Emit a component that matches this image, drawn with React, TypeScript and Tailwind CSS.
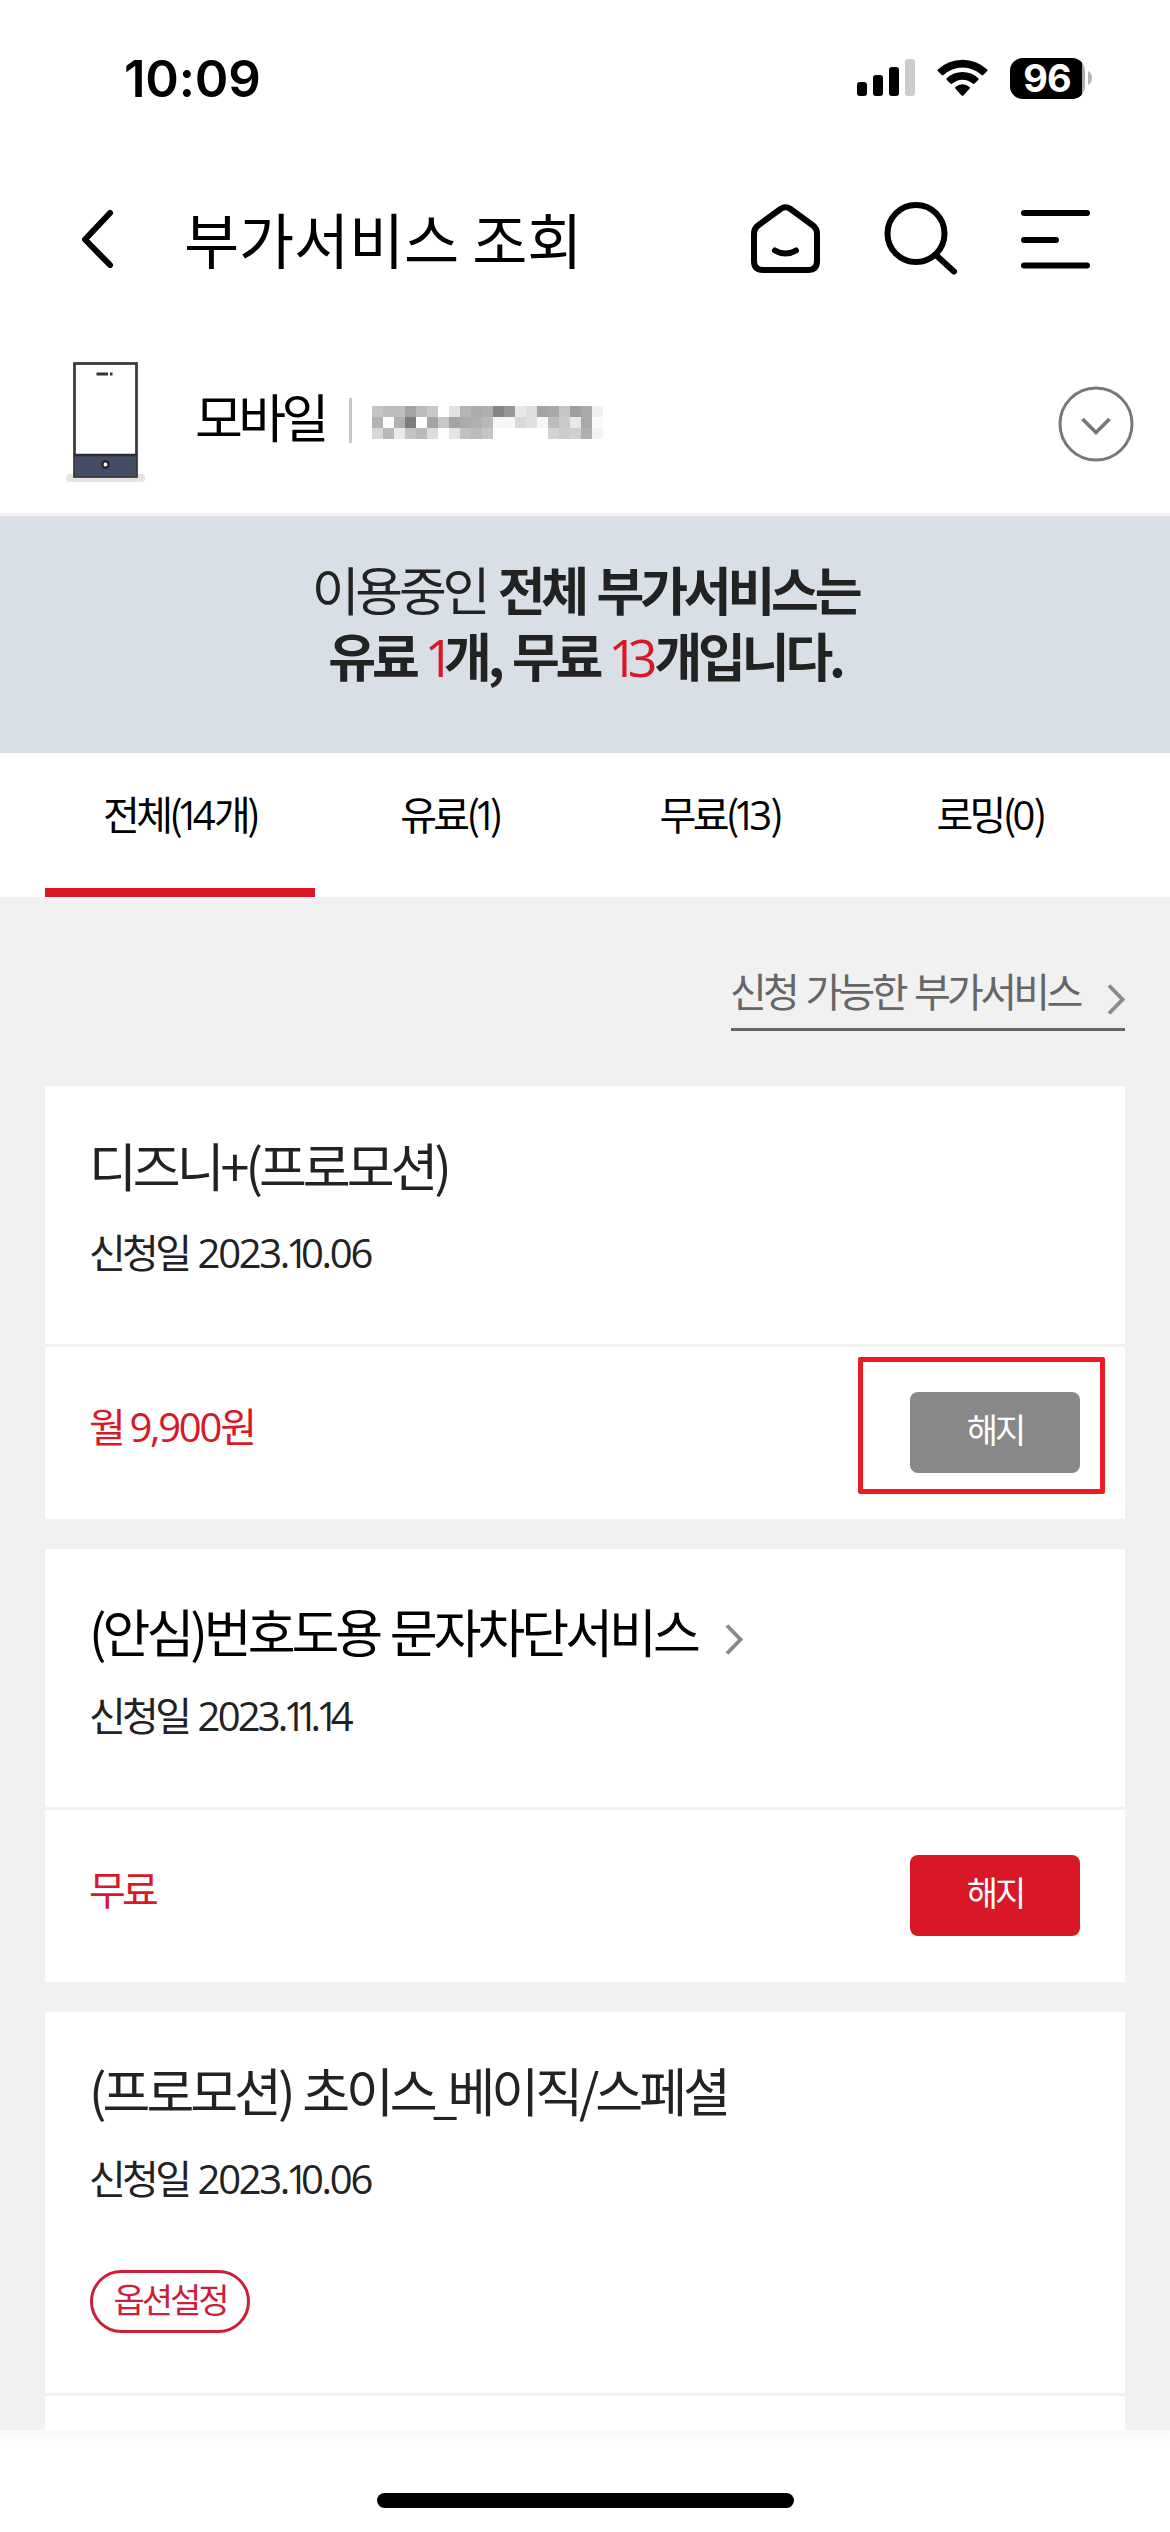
import clsx from "clsx";

interface Service {
    id: number;
    title: React.ReactNode;
    date: string;
    price: React.ReactNode;
    linked?: boolean;
    option?: boolean;
    disabled?: boolean;
    marked?: boolean;
}

// Latin digits with a tighter "1" than the font gives
function Digits({ value, className }: { value: string; className?: string }) {
    return (
        <span className={clsx("font-['Open_Sans']", className ?? "tracking-[-2.200px]")}>
            {value.split(/(1)/).map((part, i) =>
                part === "1" ? <span key={i} className="-ml-[0.050em] -mr-[0.140em]">1</span> : part
            )}
        </span>
    );
}

const tabs = [
    { name: "전체", count: "14", suffix: "개" },
    { name: "유료", count: "1" },
    { name: "무료", count: "13" },
    { name: "로밍", count: "0" },
];

const services: Service[] = [
    {
        id: 1,
        title: "디즈니+(프로모션)",
        date: "2023.10.06",
        price: <>월 <Digits value="9,900" />원</>,
        disabled: true,
        marked: true,
    },
    { id: 2, title: "(안심)번호도용 문자차단서비스", date: "2023.11.14", price: "무료", linked: true },
    {
        id: 3,
        title: <span>(프로모션) 초이스<span className="-mr-[5px] font-['Open_Sans']">_</span>베이직/스페셜</span>,
        date: "2023.10.06",
        price: "무료",
        option: true,
    },
];

// Masked phone number, one grey level per block
const mask = [
    "c5 be be a3 bb c8 ff e2 b5 ab b0 86 96 e8 de a3 a9 c6 9e a9 f0",
    "b4 fb b1 7d ff a3 c8 a5 ac b0 b8 f6 f6 d8 e0 f6 bc ca e8 a9 fa",
    "d8 b8 e9 c4 ba dd fd e4 c1 bb c5 ff ff ff ff ff d3 cc d0 b0 f2",
];

function StatusBar() {
    return (
        <div className="flex h-[156px] items-center justify-between pl-[124px] pr-[78px] font-['Inter']">
            <span className="text-[51px] font-semibold leading-none tracking-[-0.2px]">10:09</span>
            <div className="flex items-center">
                <svg width="58" height="38" viewBox="0 0 58 38">
                    <rect x="0" y="23" width="10" height="14" rx="3" />
                    <rect x="16" y="16" width="10" height="21" rx="3" />
                    <rect x="32" y="8" width="10" height="29" rx="3" />
                    <rect x="48" y="0" width="10" height="37" rx="3" fill="#ccc" />
                </svg>
                <svg className="ml-[22px]" width="51" height="38" viewBox="0 0 51 38">
                    <path d="M0.8 10.5Q0 11.4 1 12.3L4.8 16Q5.6 16.7 6.5 15.9A28 28 0 0 1 44.5 15.9Q45.4 16.7 46.2 16L50 12.3Q51 11.4 50.2 10.5A36 36 0 0 0 0.8 10.5Z" />
                    <path d="M9.7 19.2Q8.9 20.1 9.8 20.9L13.7 24.7Q14.5 25.4 15.4 24.6A15 15 0 0 1 35.6 24.6Q36.5 25.4 37.3 24.7L41.2 20.9Q42.1 20.1 41.3 19.2A23 23 0 0 0 9.7 19.2Z" />
                    <path d="M18.5 28Q17.6 28.9 18.5 29.7L24.6 36.4Q25.5 37.2 26.4 36.4L32.5 29.7Q33.4 28.9 32.5 28A10.5 10.5 0 0 0 18.5 28Z" />
                </svg>
                <div className="ml-[22px] flex h-[41px] w-[75px] items-center overflow-hidden rounded-[13px] bg-[#aaa]">
                    <div className="flex h-[41px] w-[72px] items-center justify-center bg-black pl-[2px] text-[38px] font-bold leading-[41px] tracking-[-1px] text-white">
                        96
                    </div>
                </div>
                <svg className="ml-[3px]" width="4" height="14" viewBox="0 0 4 14">
                    <path d="M0 0Q4 2 4 7T0 14Z" fill="#b5b5b5" />
                </svg>
            </div>
        </div>
    );
}

function TitleBar() {
    return (
        <header className="flex h-[166px] items-center pl-[80px] pr-[80px]">
            <svg width="34" height="60" viewBox="0 0 34 60" fill="none" stroke="#000" strokeWidth="6" strokeLinecap="round" strokeLinejoin="round">
                <path d="M30 4L5 30.500L30 56" />
            </svg>
            <h1 className="-mt-[3px] ml-[70px] grow text-[60px] leading-[80px] tracking-[-0.2px]">부가서비스 조회</h1>
            <svg width="70" height="76" viewBox="0 0 70 76" fill="none" stroke="#000" strokeWidth="6" strokeLinecap="round">
                <path d="M29.500 8Q34.500 4.500 39.500 8L62 24.500Q66 27.500 66 33V60Q66 69 57 69H12Q3 69 3 60V33Q3 27.500 7 24.500Z" />
                <path d="M24 49.500Q34.500 55.500 45 49.500" />
            </svg>
            <svg className="ml-[63px]" width="74" height="76" viewBox="0 0 74 76" fill="none" stroke="#000" strokeWidth="6" strokeLinecap="round">
                <circle cx="32" cy="32.500" r="28.500" />
                <path d="M53 55L70 70.500" />
            </svg>
            <svg className="ml-[63px]" width="69" height="60" viewBox="0 0 69 60" stroke="#000" strokeWidth="6" strokeLinecap="round">
                <path d="M3 4H66M3 31H35M3 56.500H66" />
            </svg>
        </header>
    );
}

function LineSelector() {
    return (
        <div className="flex h-[194px] items-center border-b-[3px] border-[#f1f1f1] pl-[66px] pr-[36px]">
            <svg className="mt-[9px]" width="79" height="122" viewBox="0 0 79 122">
                <rect x="0" y="113" width="79" height="8" rx="4" fill="#e4e4e4" />
                <rect x="8.500" y="2.500" width="62" height="113" fill="#fff" stroke="#3d3d3d" strokeWidth="2.800" />
                <rect x="9.500" y="95" width="60" height="19.500" fill="#434d66" />
                <path d="M8 94H71" stroke="#2c2c2c" strokeWidth="2.600" />
                <path d="M30.500 13H42M44 13H46.500" stroke="#333" strokeWidth="3" />
                <circle cx="39.500" cy="103.500" r="3.200" fill="#fff" stroke="#2a2a2a" strokeWidth="2.600" />
            </svg>
            <span className="-mt-[3px] ml-[50px] text-[52px] leading-[66px] tracking-[-4.600px]">모바일</span>
            <span className="ml-[24px] mt-[6px] h-[45px] w-[3px] bg-[#c8c8c8]" />
            <div className="ml-[20px] mt-[10px] grid grid-cols-[repeat(21,11px)] auto-rows-[11px]">
                {mask.flatMap((row, r) =>
                    row.split(" ").map((g, c) => (
                        <span key={`${r}-${c}`} style={{ backgroundColor: `#${g}${g}${g}` }} />
                    ))
                )}
            </div>
            <svg className="ml-auto mt-[12px]" width="76" height="76" viewBox="0 0 76 76" fill="none" stroke="#777" strokeWidth="3">
                <circle cx="38" cy="38" r="36" />
                <path d="M24.500 33L38 46.500L51.500 33" strokeWidth="3.600" />
            </svg>
        </div>
    );
}

function Summary() {
    return (
        <div className="h-[237px] bg-[#d8dfe7] pt-[40px] text-center text-[52px] leading-[66px] tracking-[-4.200px] text-[#222] [word-spacing:4px]">
            <p>
                이용중인 <b>전체 부가서비스는</b>
            </p>
            <p className="font-bold">
                유료 <Digits value="1" className="font-normal tracking-[-3px] text-[#d91827]" />개, 무료{" "}
                <Digits value="13" className="font-normal tracking-[-3px] text-[#d91827]" />개입니다.
            </p>
        </div>
    );
}

function Chevron({ className }: { className?: string }) {
    return (
        <svg className={className} width="18" height="31" viewBox="0 0 18 31" fill="none" stroke="#8a8a8a" strokeWidth="3.800">
            <path d="M2 1.500L15.500 15.500L2 29.500" />
        </svg>
    );
}

function ServiceCard({ service }: { service: Service }) {
    return (
        <section className="bg-white">
            <div className={clsx("border-b-[3px] border-[#f1f1f1] pl-[44px]", service.option ? "h-[384px]" : "h-[261px]", service.linked ? "pt-[49px]" : "pt-[46px]")}>
                <h2 className={clsx("flex h-[66px] items-center text-[52px] leading-[66px] tracking-[-4px] [word-spacing:3px]", service.linked ? "text-black" : "text-[#222]")}>
                    {service.title}
                    {service.linked && <Chevron className="ml-[28px] mt-[16px]" />}
                </h2>
                <p className={clsx("text-[40px] leading-[48px] tracking-[-3.700px] text-[#222] [word-spacing:4px]", service.linked ? "mt-[26px]" : "mt-[29px]")}>
                    신청일 <Digits value={service.date} className={service.linked ? "tracking-[-2.800px]" : "tracking-[-2.300px]"} />
                </p>
                {service.option && (
                    <button className="ml-px mt-[67px] block h-[63px] w-[160px] rounded-full border-[3px] border-[#cb2038] pb-[5px] text-[34px] leading-[50px] tracking-[-3px] text-[#cb2038]">
                        옵션설정
                    </button>
                )}
            </div>
            <div className="flex h-[172px] items-start justify-between pl-[44px] pr-[45px] pt-[45px]">
                <span className="mt-[9px] text-[40px] leading-[48px] tracking-[-3.700px] text-[#d91827] [word-spacing:2px]">{service.price}</span>
                <div className="relative">
                    <button className={clsx("block h-[81px] w-[170px] rounded-[8px] pb-[8px] text-[34px] leading-[50px] tracking-[-3px] text-white", service.disabled ? "bg-[#888]" : "bg-[#d91827]")}>
                        해지
                    </button>
                    {service.marked && (
                        <div className="absolute -left-[52px] -top-[35px] h-[137px] w-[247px] rounded-[2px] border-[5px] border-[#ed1c24]" />
                    )}
                </div>
            </div>
        </section>
    );
}

export default function App() {
    return (
        <div className="flex h-[2532px] w-[1170px] flex-col overflow-hidden bg-white font-['Noto_Sans_CJK_KR',sans-serif] text-black">
            <StatusBar />
            <TitleBar />
            <LineSelector />
            <Summary />
            <nav className="grid h-[144px] shrink-0 grid-cols-4 px-[45px]">
                {tabs.map((tab, i) => (
                    <div
                        key={tab.name}
                        className={clsx("pt-[34px] text-center text-[40px] leading-[52px] tracking-[-3.700px]", i === 0 && "border-b-[9px] border-[#d91827]")}
                    >
                        {tab.name}(<Digits value={tab.count} className="tracking-[-1.600px]" />
                        {tab.suffix})
                    </div>
                ))}
            </nav>
            <main className="h-[1533px] shrink-0 overflow-hidden bg-[#f1f1f1] px-[45px] pt-[68px]">
                <a className="ml-auto flex h-[66px] w-[394px] items-start justify-between border-b-[3px] border-[#666] text-[40px] leading-[50px] tracking-[-3.700px] text-[#666] [word-spacing:4px]">
                    <span className="-ml-px">신청 가능한 부가서비스</span>
                    <Chevron className="mt-[19px]" />
                </a>
                <div className="mt-[55px] flex flex-col gap-[30px]">
                    {services.map((service) => (
                        <ServiceCard key={service.id} service={service} />
                    ))}
                </div>
            </main>
            <footer className="flex h-[102px] shrink-0 flex-col items-center justify-end bg-linear-to-b from-[#f9f9f9] to-white to-18% pb-[24px]">
                <div className="h-[15px] w-[417px] rounded-full bg-black" />
            </footer>
        </div>
    );
}
